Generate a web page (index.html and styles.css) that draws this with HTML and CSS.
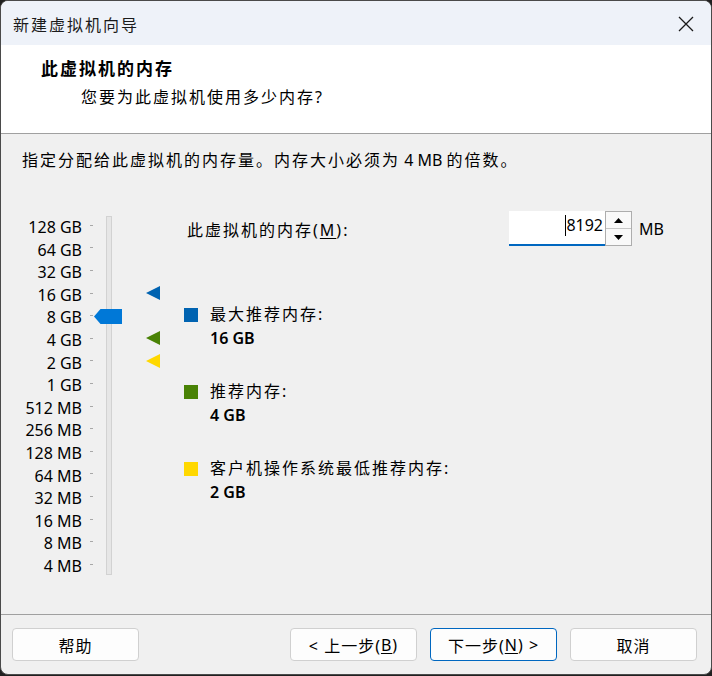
FILE: index.html
```html
<!DOCTYPE html>
<html lang="zh-CN">
<head>
<meta charset="utf-8">
<title>新建虚拟机向导</title>
<link rel="stylesheet" href="styles.css">
</head>
<body>
<div class="window">
  <div class="titlebar">
    <span class="title">新建虚拟机向导</span>
    <svg class="close" width="16" height="16" viewBox="0 0 16 16"><path d="M1 1L15 15M15 1L1 15" stroke="#1a1a1a" stroke-width="1.3" fill="none"/></svg>
  </div>
  <div class="header">
    <h1>此虚拟机的内存</h1>
    <p class="subtitle">您要为此虚拟机使用多少内存?</p>
  </div>
  <div class="content">
    <p class="desc">指定分配给此虚拟机的内存量。内存大小必须为<span class="latin"> 4 MB </span>的倍数。</p>
    <div class="main">
      <div class="slider">
        <div class="labels">
          <span>128 GB</span><span>64 GB</span><span>32 GB</span><span>16 GB</span>
          <span>8 GB</span><span>4 GB</span><span>2 GB</span><span>1 GB</span>
          <span>512 MB</span><span>256 MB</span><span>128 MB</span><span>64 MB</span>
          <span>32 MB</span><span>16 MB</span><span>8 MB</span><span>4 MB</span>
        </div>
        <div class="ticks">
          <i></i><i></i><i></i><i></i><i></i><i></i><i></i><i></i>
          <i></i><i></i><i></i><i></i><i></i><i></i><i></i><i></i>
        </div>
        <div class="rail">
          <svg class="thumb" width="28" height="15" viewBox="0 0 28 15"><polygon points="0,7.5 6.5,0 28,0 28,15 6.5,15" fill="#0078d7"/></svg>
        </div>
        <div class="marks">
          <span></span><span></span><span></span>
          <span><svg width="14" height="14" viewBox="0 0 14 14"><polygon points="0,7 14,0 14,14" fill="#0063b1"/></svg></span>
          <span></span>
          <span><svg width="14" height="14" viewBox="0 0 14 14"><polygon points="0,7 14,0 14,14" fill="#498205"/></svg></span>
          <span><svg width="14" height="14" viewBox="0 0 14 14"><polygon points="0,7 14,0 14,14" fill="#ffd800"/></svg></span>
        </div>
      </div>
      <div class="panel">
        <div class="mem-row">
          <span class="mem-label">此虚拟机的内存(<u>M</u>):</span>
          <div class="input"><span class="caret"></span><span>8192</span></div>
          <div class="spin">
            <div class="spin-btn"><svg width="9" height="5" viewBox="0 0 9 5"><polygon points="4.5,0 9,5 0,5" fill="#000"/></svg></div>
            <div class="spin-btn"><svg width="9" height="5" viewBox="0 0 9 5"><polygon points="0,0 9,0 4.5,5" fill="#000"/></svg></div>
          </div>
          <span class="unit">MB</span>
        </div>
        <div class="legend">
          <div class="item">
            <span class="swatch blue"></span>
            <div>
              <div class="item-label">最大推荐内存:</div>
              <div class="item-value">16 GB</div>
            </div>
          </div>
          <div class="item">
            <span class="swatch green"></span>
            <div>
              <div class="item-label">推荐内存:</div>
              <div class="item-value">4 GB</div>
            </div>
          </div>
          <div class="item">
            <span class="swatch yellow"></span>
            <div>
              <div class="item-label">客户机操作系统最低推荐内存:</div>
              <div class="item-value">2 GB</div>
            </div>
          </div>
        </div>
      </div>
    </div>
  </div>
  <div class="footer">
    <button class="btn">帮助</button>
    <div class="btn-group">
      <button class="btn">&lt; 上一步(<u>B</u>)</button>
      <button class="btn focus">下一步(<u>N</u>) &gt;</button>
      <button class="btn">取消</button>
    </div>
  </div>
</div>
</body>
</html>
```
FILE: styles.css
```css
* { box-sizing: border-box; }

body {
  margin: 0;
  background: #202020;
  font-family: "Noto Sans", "Noto Sans CJK SC", sans-serif;
  font-size: 16px;
  color: #000;
}

.window {
  width: 712px;
  height: 675px;
  border: 1px solid #4a4a4a;
  border-radius: 8px;
  overflow: hidden;
  display: flex;
  flex-direction: column;
  background: #f0f0f0;
}

.titlebar {
  height: 44px;
  flex: none;
  background: #eef2f9;
  display: flex;
  align-items: center;
  justify-content: space-between;
  padding: 1px 17px 0 12px;
}

.title {
  font-size: 16px;
  letter-spacing: 2px;
  color: #1b1b1b;
}

.close { display: block; }

.header {
  height: 89px;
  flex: none;
  background: #fff;
  border-bottom: 1px solid #a0a0a0;
  padding: 13px 0 0 40px;
}

.header h1 {
  margin: 0;
  font-size: 17px;
  font-weight: 700;
  line-height: 22px;
  letter-spacing: 2px;
}

.subtitle {
  margin: 6px 0 0 40px;
  line-height: 22px;
  letter-spacing: 2px;
}

.content {
  flex: 1;
  padding: 16px 0 0 21px;
}

.desc {
  margin: 0;
  line-height: 20px;
  letter-spacing: 2px;
}

.latin {
  letter-spacing: 0;
}

.main {
  display: flex;
  align-items: flex-start;
  margin-top: 41px;
}

.slider {
  display: flex;
  align-items: flex-start;
  margin-top: 5px;
}

.labels {
  width: 60px;
  display: flex;
  flex-direction: column;
  text-align: right;
}

.labels span {
  height: 22.6px;
  line-height: 22.6px;
  white-space: nowrap;
}

.ticks {
  width: 3px;
  margin-left: 8px;
  margin-top: -2px;
  display: flex;
  flex-direction: column;
}

.ticks i {
  display: block;
  height: 22.6px;
  background: linear-gradient(#a8a8a8, #a8a8a8) center / 3px 1px no-repeat;
}

.rail {
  position: relative;
  width: 6px;
  height: 359px;
  margin-left: 13px;
  background: #e6e6e6;
  border: 1px solid #d2d2d2;
}

.thumb {
  position: absolute;
  left: -13px;
  top: 92px;
  display: block;
}

.marks {
  width: 14px;
  margin-left: 34px;
  margin-top: -2px;
  display: flex;
  flex-direction: column;
}

.marks span {
  height: 22.6px;
  display: flex;
  align-items: center;
}

.panel {
  margin-left: 24px;
}

.mem-row {
  display: flex;
  align-items: center;
  height: 35px;
}

.mem-label {
  width: 325px;
  padding-left: 3px;
  letter-spacing: 2px;
}

u { text-underline-offset: 2px; }

.input {
  width: 96px;
  height: 35px;
  background: #fff;
  border-bottom: 2px solid #0067c0;
  display: flex;
  justify-content: flex-end;
  align-items: center;
  padding: 0 2px 5px 0;
}

.caret {
  width: 1px;
  height: 21px;
  background: #000;
}

.spin {
  width: 27px;
  height: 35px;
  border: 1px solid #adadad;
  display: flex;
  flex-direction: column;
  background: #f9f9f9;
}

.spin-btn {
  flex: 1;
  display: flex;
  align-items: center;
  justify-content: center;
}

.spin-btn + .spin-btn {
  border-top: 1px solid #c6c6c6;
}

.unit {
  margin-left: 7px;
}

.legend {
  margin-top: 56px;
  display: flex;
  flex-direction: column;
  gap: 29px;
}

.item {
  display: flex;
  align-items: flex-start;
}

.swatch {
  flex: none;
  width: 14px;
  height: 14px;
  margin: 6px 12px 0 0;
}

.swatch.blue { background: #0063b1; }
.swatch.green { background: #498205; }
.swatch.yellow { background: #ffd800; }

.item-label {
  line-height: 24px;
  letter-spacing: 2px;
}

.item-value {
  line-height: 24px;
  font-weight: 600;
}

.footer {
  height: 60px;
  flex: none;
  border-top: 1px solid #a0a0a0;
  padding: 13px 14px 0 11px;
  display: flex;
  justify-content: space-between;
  align-items: flex-start;
}

.btn-group {
  display: flex;
  gap: 13px;
}

.btn {
  width: 127px;
  height: 33px;
  border: 1px solid #d0d0d0;
  border-radius: 4px;
  background: #fdfdfd;
  font-family: inherit;
  font-size: 16px;
  color: #000;
  letter-spacing: 1px;
  padding: 0;
  display: flex;
  align-items: center;
  justify-content: center;
}

.btn.focus {
  border-color: #0067c0;
}
```
